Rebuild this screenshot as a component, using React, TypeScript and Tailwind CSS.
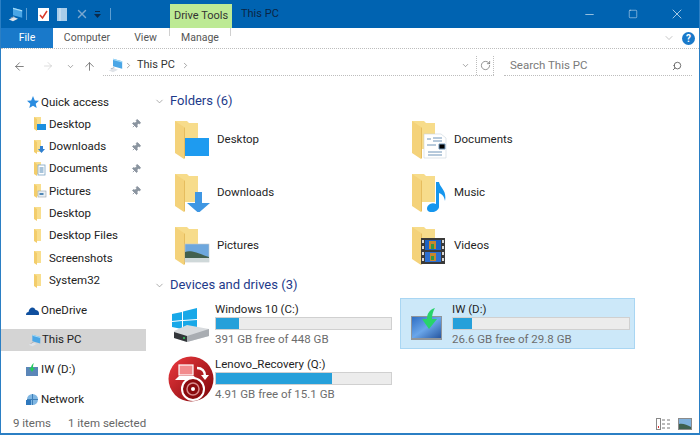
import React from 'react';
import { ArrowLeft, ArrowRight, ArrowUp, ChevronDown, ChevronRight, Minus, Square, X, RotateCw, Search, Pin } from 'lucide-react';

const PcIcon = ({ size = 18 }: { size?: number }) => (
  <svg width={size} height={size} viewBox="0 0 18 18" className="shrink-0">
    <path d="M6 1l11 3v9L6 10z" fill="#4aa6e6" />
    <path d="M6 1l11 3v1.500L6 2.500z" fill="#a6dcf8" />
    <path d="M1 15l6-3 5 2-6 3z" fill="#dfe3e8" />
    <path d="M3 13l4-2 1 .5-4 2z" fill="#9aa4b0" />
  </svg>
);

const SmallFolder = ({ badge }: { badge?: 'desk' | 'down' | 'doc' | 'pic' }) => (
  <svg width="14" height="16" viewBox="0 0 14 16" className="shrink-0">
    <path d="M1 1h7v12H1z" fill="#f8de8e" />
    <path d="M1 1l3 2v12l-3-2z" fill="#f3cd6b" />
    {badge === 'desk' && <rect x="4" y="8" width="9" height="6" fill="#1c8fe0" />}
    {badge === 'down' && <path d="M7 7h3v3h2l-3.500 4L5 10h2z" fill="#2f7fd0" />}
    {badge === 'doc' && <g><rect x="5" y="4" width="7" height="10" fill="#fff" stroke="#7ba3c4" strokeWidth="0.8" /><path d="M6.500 7h4M6.500 9h4M6.500 11h4" stroke="#4f87b5" /></g>}
    {badge === 'pic' && <g><rect x="5" y="8" width="8" height="6" fill="#e8eef3" stroke="#9aa5ad" strokeWidth="0.6" /><rect x="6.500" y="10" width="4" height="2" fill="#4f87b5" /></g>}
  </svg>
);

// the big folder with its overlay, overlay is drawn by the caller
const BigFolder = ({ children }: { children?: React.ReactNode }) => (
  <svg width="38" height="38" viewBox="0 0 38 38" className="shrink-0">
    <path d="M1 0h12l2 2h9v26H1z" fill="#f7dc8b" />
    <path d="M1 0l9 6v32l-9-6z" fill="#f4d27a" />
    <path d="M10 6v32l1-1V7z" fill="#e6bd5e" />
    {children}
  </svg>
);

const StorageIcon = {
  windows: (
    <svg width="42" height="36" viewBox="0 0 42 36">
      <path d="M2 8l10-2v8l-10 1zM13 5.500L27 2v11l-14 1zM2 16l10-1v8l-10-2zM13 15l14-1v10l-14-1z" fill="#18a8e8" />
      <path d="M4 25l13-6 22 4v7L17 36 4 32z" fill="#d8dbde" />
      <path d="M4 26l13 4v6L4 32z" fill="#33363a" />
      <path d="M17 30l22-7v7L17 36z" fill="#a9adb2" />
      <circle cx="14" cy="32" r="1" fill="#35d05c" />
    </svg>
  ),
  lenovo: (
    <svg width="46" height="46" viewBox="0 0 46 46">
      <defs>
        <linearGradient id="lenovoRed" x1="0" y1="0" x2="1" y2="1">
          <stop offset="0" stopColor="#ee3a40" />
          <stop offset="1" stopColor="#7d0508" />
        </linearGradient>
      </defs>
      <circle cx="23" cy="23" r="22.500" fill="url(#lenovoRed)" />
      <rect x="11" y="9" width="14" height="10" fill="#f28b8d" stroke="#fff" strokeWidth="1.200" />
      <path d="M7 24l4-4h15l3 4z" fill="#fff" />
      <path d="M29 12c5 0 8 3 8 8" fill="none" stroke="#fff" strokeWidth="2.500" />
      <path d="M33 19h8l-4 5z" fill="#fff" />
      <circle cx="25" cy="33" r="11" fill="#8a0b0e" stroke="#fff" strokeWidth="2" />
      <circle cx="25" cy="33" r="6" fill="none" stroke="#d98a8b" strokeWidth="1.500" />
      <circle cx="25" cy="33" r="2" fill="#fff" />
    </svg>
  ),
  usb: (
    <svg width="32" height="32" viewBox="0 0 32 32">
      <defs>
        <linearGradient id="usbBlue" x1="0" y1="0" x2="1" y2="1">
          <stop offset="0" stopColor="#2f6fc4" />
          <stop offset="0.500" stopColor="#6aa6ea" />
          <stop offset="1" stopColor="#27569f" />
        </linearGradient>
      </defs>
      <rect x="0" y="8" width="31" height="24" fill="#8f959b" />
      <rect x="1" y="9" width="29" height="21" fill="url(#usbBlue)" />
      <path d="M24 0c-6 2-8 6-8 11h-5l7 10 8-10h-5c0-4 1-8 3-11z" fill="#28d46a" />
    </svg>
  ),
};

const NavRow = ({ label, icon, bold, pinned, className = '' }: { label: string; icon: React.ReactNode; bold?: boolean; pinned?: boolean; className?: string }) => (
  <div className={`flex items-center h-[22.300px] gap-[2px] ${bold ? 'pl-[25px]' : 'pl-[32px]'} ${className}`}>
    {icon}
    <span className="flex-1 truncate">{label}</span>
    {pinned && <Pin size={10} className="mr-[5px] text-[#8b95a0] fill-[#8b95a0] rotate-45" />}
  </div>
);

const SectionHeader = ({ title }: { title: string }) => (
  <div className="flex items-center gap-[5px] h-[22px] text-[#1e3a8a] text-[13px]">
    <ChevronDown size={11} className="text-[#8a8a8a]" strokeWidth={1.500} />
    <span>{title}</span>
  </div>
);

const FolderTile = ({ label, children }: { label: string; children?: React.ReactNode }) => (
  <div className="flex items-center gap-[5px] h-[52.700px] text-[#1f1f1f]">
    <BigFolder>{children}</BigFolder>
    <span className="mb-[1px]">{label}</span>
  </div>
);

const DriveTile = ({ name, free, used, icon, iconBox, selected }: { name: string; free: string; used: string; icon: React.ReactNode; iconBox: string; selected?: boolean }) => (
  <div className={`flex items-center h-[51px] w-[235px] border ${selected ? 'bg-[#cce8f9] border-[#a9d6f3] pr-[4px]' : 'border-transparent pr-[7px]'}`}>
    <div className={`flex justify-center shrink-0 ${iconBox}`}>{icon}</div>
    <div className="flex-1 pt-[2px]">
      <div className="leading-[13px] text-[#1f1f1f]">{name}</div>
      <div className="h-[13px] border border-[#d0d0d0] bg-[#ececec] mt-[1px]">
        <div className="h-full bg-[#26a0da]" style={{ width: used }} />
      </div>
      <div className="leading-[15px] mt-[2px] text-[#6d6d6d]">{free}</div>
    </div>
  </div>
);

export default function App() {
  return (
    <div className="w-[700px] h-[435px] bg-white border-x border-b-2 border-[#2b7fc4] overflow-hidden flex flex-col text-[11.500px] text-[#222] font-['Roboto',sans-serif]">
      {/* Title bar */}
      <div className="h-[28px] bg-[#0063b1] flex items-end shrink-0 -mx-px pl-[8px]">
        <div className="flex items-center h-[28px] w-[162px]">
          <PcIcon size={15} />
          <span className="w-px h-[12px] bg-[#5d9ed2] ml-[3px]" />
          <svg width="11" height="13" viewBox="0 0 11 13" className="ml-[11px]">
            <rect width="11" height="13" fill="#fff" />
            <path d="M2 7l2.500 3L9 3" fill="none" stroke="#d8392b" strokeWidth="1.500" />
          </svg>
          <svg width="10" height="13" viewBox="0 0 10 13" className="ml-[8px]">
            <rect width="10" height="13" fill="#a9cdea" />
            <path d="M3 0v13" stroke="#d7e8f5" />
          </svg>
          <X size={14} strokeWidth={2.500} className="text-[#7aa7cf] ml-[8px]" />
          <svg width="7" height="7" viewBox="0 0 7 7" className="ml-[5px]">
            <path d="M1 0h5v1H1zM0 3h7L3.500 7z" fill="#0b2a4a" />
          </svg>
          <span className="w-px h-[12px] bg-[#5d9ed2] ml-[9px]" />
        </div>
        <div className="h-[24px] w-[62px] bg-[#bdea95] flex items-center justify-center text-[#333] text-[11px]">Drive Tools</div>
        <div className="h-[28px] flex items-center pl-[9px] text-[11px] text-[#0b2545]">This PC</div>
        <div className="flex-1" />
        <div className="h-[28px] flex items-center text-[#e4eff8]">
          <Minus size={13} className="mr-[32px]" strokeWidth={1.200} />
          <Square size={10} className="mr-[31px]" strokeWidth={1.200} />
          <X size={16} className="mr-[15px]" strokeWidth={1.100} />
        </div>
      </div>

      {/* Ribbon tabs */}
      <div className="h-[21px] flex items-stretch shrink-0 border-b border-dotted border-[#bdbdbd] text-[#555] text-[10.500px]">
        <div className="w-[52px] bg-[#1979ca] text-white flex items-center justify-center">File</div>
        <div className="w-[64px] flex items-center justify-center ml-[2px]">Computer</div>
        <div className="w-[47px] flex items-center justify-center ml-[3px]">View</div>
        <div className="w-[62px] flex items-start justify-between">
          <span className="w-px h-[8px] bg-[#d0d0d0]" />
          <span className="self-center">Manage</span>
          <span className="w-px h-[8px] bg-[#d0d0d0]" />
        </div>
        <div className="flex-1" />
        <ChevronDown size={12} strokeWidth={1} className="self-center text-[#8b8b8b] mr-[7px]" />
        <div className="self-center w-[13px] h-[13px] mr-[4px] rounded-full bg-[#1979ca] text-white text-[10px] font-bold flex items-center justify-center">?</div>
      </div>

      {/* Nav bar */}
      <div className="h-[33px] flex items-center shrink-0 pl-[12px] pt-[1px]">
        <ArrowLeft size={13} strokeWidth={1.500} className="text-[#666]" />
        <ArrowRight size={12} strokeWidth={1} className="text-[#bbb] ml-[16px]" />
        <ChevronDown size={9} strokeWidth={1.500} className="text-[#666] ml-[12px]" />
        <ArrowUp size={13} strokeWidth={1.500} className="text-[#666] ml-[8px]" />
        <div className="flex items-center w-[391px] h-[19px] ml-[7px] border-b border-dotted border-[#bdbdbd] pl-[5px]">
          <PcIcon size={15} />
          <ChevronRight size={9} strokeWidth={1.500} className="text-[#666] ml-[1px]" />
          <span className="ml-[4px] text-[11px] text-[#333]">This PC</span>
          <ChevronRight size={9} strokeWidth={1.500} className="text-[#666] ml-[6px]" />
          <div className="flex-1" />
          <ChevronDown size={9} strokeWidth={1.500} className="text-[#666] mr-[6px]" />
          <div className="w-[18px] h-[19px] border-x border-dotted border-[#bdbdbd] flex items-center justify-center">
            <RotateCw size={11} strokeWidth={1.500} className="text-[#666]" />
          </div>
        </div>
        <div className="flex items-center w-[188px] h-[19px] ml-[10px] border-b border-dotted border-[#bdbdbd] pl-[6px] pr-[10px] text-[#7a7a7a]">
          <span className="flex-1">Search This PC</span>
          <Search size={10} strokeWidth={2} className="text-[#555] -scale-x-100" />
        </div>
      </div>

      {/* Body */}
      <div className="flex-1 flex min-h-0">
        <div className="w-[145px] shrink-0 pt-[9px]">
          <NavRow bold label="Quick access" icon={
            <svg width="13" height="13" viewBox="0 0 13 13" className="shrink-0"><path d="M7 0l1.800 4.500 4.200.3-3.300 2.900 1 4.300L7 9.700 3.300 12l1-4.300L1 4.800l4.200-.3z" fill="#2a8ce0" /></svg>
          } />
          <NavRow pinned label="Desktop" icon={<SmallFolder badge="desk" />} />
          <NavRow pinned label="Downloads" icon={<SmallFolder badge="down" />} />
          <NavRow pinned label="Documents" icon={<SmallFolder badge="doc" />} />
          <NavRow pinned label="Pictures" icon={<SmallFolder badge="pic" />} />
          <NavRow label="Desktop" icon={<SmallFolder />} />
          <NavRow label="Desktop Files" icon={<SmallFolder />} />
          <NavRow label="Screenshots" icon={<SmallFolder />} />
          <NavRow label="System32" icon={<SmallFolder />} />
          <NavRow bold label="OneDrive" className="mt-[8px]" icon={
            <svg width="13" height="13" viewBox="0 0 13 13" className="shrink-0"><path d="M0 11c0-2 1-3 2.500-3 .5-3 2-4.500 4-4.500 1.500 0 2.500 1 3 2.500 2 0 3.500 1.500 3.500 3.500 0 .6 0 1-.2 1.500z" fill="#0f4f9e" /></svg>
          } />
          <div className="flex items-center h-[22.300px] mt-[7px] pl-[27px] gap-[1px] bg-[#d4d4d4]">
            <PcIcon size={13} />
            <span>This PC</span>
          </div>
          <NavRow bold label="IW (D:)" className="mt-[7px]" icon={
            <svg width="13" height="13" viewBox="0 0 13 13" className="shrink-0"><rect y="4" width="12" height="9" fill="#5b86b8" /><path d="M8 0C6 1 5 3 5 5H3l3 4 3-4H7c0-2 0-3 1-5z" fill="#27c85e" /></svg>
          } />
          <NavRow bold label="Network" className="mt-[8px]" icon={
            <svg width="13" height="13" viewBox="0 0 13 13" className="shrink-0"><circle cx="6.500" cy="6.500" r="5.500" fill="#7fb6e2" /><path d="M1 6.500h11M6.500 1v11" stroke="#3e7fb8" /><rect x="0" y="7" width="5" height="5" fill="#2f78bd" /></svg>
          } />
        </div>

        <div className="flex-1 pt-[8px] pl-[8px]">
          <SectionHeader title="Folders (6)" />
          <div className="grid grid-cols-[237px_1fr] pl-[20px] mt-[2px]">
            <FolderTile label="Desktop">
              <rect x="11" y="17" width="24" height="18" fill="#1e9bf0" />
            </FolderTile>
            <FolderTile label="Documents">
              <path d="M13 13h17l5 4v20H13z" fill="#fff" stroke="#c9d3db" strokeWidth="0.600" />
              <path d="M16 18h4M22 17h9M22 20h9M16 24h9M28 23h6v5h-6zM17 31h14M17 34h14" stroke="#6f94b8" />
            </FolderTile>
            <FolderTile label="Downloads">
              <path d="M21 18h7v11h8L24.500 39 13 29h8z" fill="#3f97e3" />
            </FolderTile>
            <FolderTile label="Music">
              <path d="M25 8h3c1 6 8 8 6 19-1-5-3-7-6-8v14c0 3-5 6-9 5s-4-6 0-8c2-1 4-1 6 0z" fill="#1596ee" />
            </FolderTile>
            <FolderTile label="Pictures">
              <rect x="11" y="17" width="24" height="18" fill="#6ea7dd" stroke="#c3c9cd" strokeWidth="0.600" />
              <path d="M11 25c6-2 12 1 24 5v5H11z" fill="#43604e" />
              <path d="M11 31h24v4H11z" fill="#cfd8d9" />
            </FolderTile>
            <FolderTile label="Videos">
              <rect x="10" y="11" width="24" height="26" fill="#3a3a3a" />
              <rect x="14" y="13" width="16" height="10" fill="#1c62c4" />
              <rect x="14" y="25" width="16" height="10" fill="#2d6fd0" />
              <path d="M18 14h7v8h-7zM19 26h6v8h-6z" fill="#c9862e" />
              <path d="M20 17h3v5h-3zM20 29h3v4h-3z" fill="#2f9a45" />
              <path d="M11 13h2v3h-2zM11 19h2v3h-2zM11 25h2v3h-2zM11 31h2v3h-2zM31 13h2v3h-2zM31 19h2v3h-2zM31 25h2v3h-2zM31 31h2v3h-2z" fill="#d8d8d8" />
            </FolderTile>
          </div>
          <div className="mt-[2px]"><SectionHeader title="Devices and drives (3)" /></div>
          <div className="grid grid-cols-[235px_235px] mt-[2px] ml-[11px] justify-start gap-y-[4px]">
            <DriveTile name="Windows 10 (C:)" free="391 GB free of 448 GB" used="13%" icon={StorageIcon.windows} iconBox="w-[49px]" />
            <DriveTile selected name="IW (D:)" free="26.6 GB free of 29.8 GB" used="11%" icon={StorageIcon.usb} iconBox="w-[51px]" />
            <DriveTile name="Lenovo_Recovery (Q:)" free="4.91 GB free of 15.1 GB" used="66%" icon={StorageIcon.lenovo} iconBox="w-[49px]" />
          </div>
        </div>
      </div>

      {/* Status bar */}
      <div className="h-[18px] shrink-0 flex items-center pl-[12px] text-[#666]">
        <span className="w-[55px]">9 items</span>
        <span>1 item selected</span>
        <div className="flex-1" />
        <svg width="15" height="12" viewBox="0 0 15 12" className="mr-[7px]">
          <rect x="0.500" y="0.500" width="4" height="11" fill="#fff" stroke="#888" />
          <path d="M6 2h3M11 2h3M6 6h3M11 6h3M6 10h3M11 10h3" stroke="#777" />
          <rect x="2" y="8" width="1" height="2" fill="#d33" />
        </svg>
        <svg width="14" height="12" viewBox="0 0 14 12" className="mr-[7px]">
          <rect x="0.500" y="0.500" width="13" height="11" fill="#7fb1dd" stroke="#8b8b8b" />
          <path d="M1 6c4-1 8 1 12 3v2H1z" fill="#3f6150" />
        </svg>
      </div>
    </div>
  );
}
